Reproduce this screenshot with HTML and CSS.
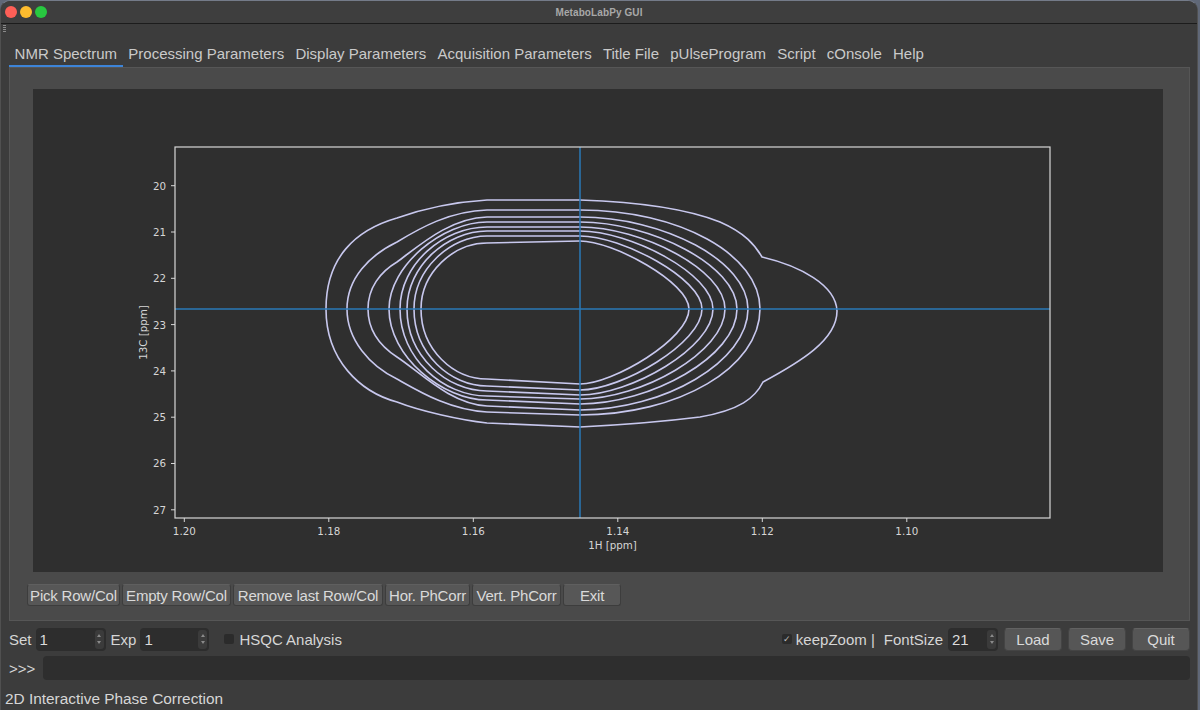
FILE: index.html
```html
<!DOCTYPE html>
<html>
<head>
<meta charset="utf-8">
<title>MetaboLabPy GUI</title>
<link rel="stylesheet" href="styles.css">
</head>
<body>
<div class="window">
  <div class="titlebar">
    <div class="lights">
      <span class="light red"></span><span class="light yellow"></span><span class="light green"></span>
    </div>
    <div class="title">MetaboLabPy GUI</div>
    <div></div>
  </div>
  <div class="main">
    <div class="grip"></div>
    <div class="tabs">
      <div class="tab active">NMR Spectrum</div>
      <div class="tab">Processing Parameters</div>
      <div class="tab">Display Parameters</div>
      <div class="tab">Acquisition Parameters</div>
      <div class="tab">Title File</div>
      <div class="tab">pUlseProgram</div>
      <div class="tab">Script</div>
      <div class="tab">cOnsole</div>
      <div class="tab">Help</div>
    </div>
    <div class="pane">
      <div class="canvas">
        <svg class="plot" width="1130" height="483" viewBox="33 89 1130 483" xmlns="http://www.w3.org/2000/svg">
          <g class="contours" fill="none" stroke="#c8c8ee" stroke-width="1.6">
            <path d="M487,200 L580,200 C640,202 690,210 720,222 C745,233 755,245 762,257 C800,266 836,285 837,311 C837,340 800,362 763,382 C755,398 740,410 700,417 C660,422 620,425 580,427 L487,423 C460,420 420,411 397,402 C360,392 326,360 326,309 C326,258 355,230 397,218 C425,208 455,202 487,200 Z"/>
            <path d="M487,210 L580,210 C679,210 760,254.5 760,309 C760,367.3 679,415 580,415 L487,412 C450,410 420,392 397,379 C370,366 347,340 347,309 C347,278 370,255 397,242 C420,228 450,211 487,210 Z"/>
            <path d="M487,217 L580,217 C664,217 748,261.2 748,309 C748,361.5 664,410 580,410 L487,406 C450,404 420,372 397,357 C380,346 368,330 368,309 C368,288 380,272 397,262 C420,245 450,218 487,217 Z"/>
            <path d="M487,222 L580,222 C650.7,222 737,265.5 737,309 C737,356.5 650.7,404 580,404 L487,400 C442.9,400 389,356.5 389,309 C389,265.5 442.9,222 487,222 Z"/>
            <path d="M487,227 L580,227 C640.9,227 725,269.6 725,309 C725,352.2 640.9,399 580,399 L487,396 C443.5,396 400,358.5 400,309 C400,263.9 443.5,227 487,227 Z"/>
            <path d="M487,231 L580,231 C630.5,231 713,273.9 713,309 C713,347.7 630.5,395 580,395 L487,391 C447,391 407,356.3 407,309 C407,266.1 447,231 487,231 Z"/>
            <path d="M487,236 L580,236 C621.5,236 702,278.3 702,309 C702,343 621.5,390 580,390 L487,386 C450.5,386 414,353.6 414,309 C414,268.9 450.5,236 487,236 Z"/>
            <path d="M487,243 L580,241 C612.7,241 689,282.2 689,309 C689,339 612.7,384 580,384 L487,379 C454,379 421,350.3 421,309 C421,272.2 454,243 487,243 Z"/>
          </g>
          <g stroke="#2a7ab8" stroke-width="1.5">
            <line x1="580" y1="147" x2="580" y2="518"/>
            <line x1="175" y1="309" x2="1050" y2="309"/>
          </g>
          <rect x="175" y="147" width="875" height="371" fill="none" stroke="#d8d8d8" stroke-width="1.2"/>
          <g stroke="#d8d8d8" stroke-width="1">
            <line x1="171" y1="185.7" x2="175" y2="185.7"/>
            <line x1="171" y1="232" x2="175" y2="232"/>
            <line x1="171" y1="278.3" x2="175" y2="278.3"/>
            <line x1="171" y1="324.6" x2="175" y2="324.6"/>
            <line x1="171" y1="370.9" x2="175" y2="370.9"/>
            <line x1="171" y1="417.2" x2="175" y2="417.2"/>
            <line x1="171" y1="463.5" x2="175" y2="463.5"/>
            <line x1="171" y1="509.8" x2="175" y2="509.8"/>
            <line x1="184.3" y1="518" x2="184.3" y2="522"/>
            <line x1="328.8" y1="518" x2="328.8" y2="522"/>
            <line x1="473.3" y1="518" x2="473.3" y2="522"/>
            <line x1="617.8" y1="518" x2="617.8" y2="522"/>
            <line x1="762.3" y1="518" x2="762.3" y2="522"/>
            <line x1="906.8" y1="518" x2="906.8" y2="522"/>
          </g>
          <g class="ticklabels" fill="#d6d6d6" text-anchor="end">
            <text x="166" y="189.6">20</text>
            <text x="166" y="235.9">21</text>
            <text x="166" y="282.2">22</text>
            <text x="166" y="328.5">23</text>
            <text x="166" y="374.8">24</text>
            <text x="166" y="421.1">25</text>
            <text x="166" y="467.4">26</text>
            <text x="166" y="513.7">27</text>
          </g>
          <g class="ticklabels" fill="#d6d6d6" text-anchor="middle">
            <text x="184.3" y="535">1.20</text>
            <text x="328.8" y="535">1.18</text>
            <text x="473.3" y="535">1.16</text>
            <text x="617.8" y="535">1.14</text>
            <text x="762.3" y="535">1.12</text>
            <text x="906.8" y="535">1.10</text>
            <text x="612.5" y="549">1H [ppm]</text>
            <text transform="translate(147,332.5) rotate(-90)">13C [ppm]</text>
          </g>
        </svg>
      </div>
      <div class="btnrow">
        <button class="pbtn w-pick">Pick Row/Col</button>
        <button class="pbtn w-empty">Empty Row/Col</button>
        <button class="pbtn w-remove">Remove last Row/Col</button>
        <button class="pbtn w-hor">Hor. PhCorr</button>
        <button class="pbtn w-vert">Vert. PhCorr</button>
        <button class="pbtn w-exit">Exit</button>
      </div>
    </div>
    <div class="controls">
      <span class="lbl">Set</span>
      <div class="spin spin-set"><span>1</span><span class="arrows"><i class="up"></i><i class="down"></i></span></div>
      <span class="lbl lbl-exp">Exp</span>
      <div class="spin spin-exp"><span>1</span><span class="arrows"><i class="up"></i><i class="down"></i></span></div>
      <span class="check check-hsqc"></span>
      <span class="lbl lbl-hsqc">HSQC Analysis</span>
      <div class="right">
        <span class="check checked">✓</span>
        <span class="lbl lbl-keep">keepZoom |</span>
        <span class="lbl lbl-font">FontSize</span>
        <div class="spin spin-font"><span>21</span><span class="arrows"><i class="up"></i><i class="down"></i></span></div>
        <button class="cbtn">Load</button>
        <button class="cbtn">Save</button>
        <button class="cbtn">Quit</button>
      </div>
    </div>
    <div class="console">
      <span class="prompt">&gt;&gt;&gt;</span>
      <div class="input"></div>
    </div>
    <div class="status">2D Interactive Phase Correction</div>
  </div>
</div>
</body>
</html>
```
FILE: styles.css
```css
html, body {
  margin: 0;
  padding: 0;
  width: 1200px;
  height: 710px;
  overflow: hidden;
  background: #606878;
}

.window {
  width: 1198px;
  height: 710px;
  box-sizing: border-box;
  background: #3c3c3c;
  border-top: 1px solid #747b89;
  border-left: 1px solid #505050;
  border-right: 1px solid #505050;
  border-radius: 10px 10px 0 0;
  overflow: hidden;
  display: flex;
  flex-direction: column;
  font-family: "Liberation Sans", Arial, sans-serif;
  color: #d6d6d6;
}

.titlebar {
  height: 22px;
  border-bottom: 1px solid #1c1c1c;
  background: #3e3e3e;
  display: grid;
  grid-template-columns: 1fr auto 1fr;
  align-items: center;
}

.lights {
  display: flex;
  gap: 3px;
  padding-left: 4px;
}

.light {
  width: 12px;
  height: 12px;
  border-radius: 50%;
  display: block;
}
.red { background: #fe5f57; }
.yellow { background: #febc2e; }
.green { background: #28c840; }

.title {
  font-size: 10px;
  font-weight: bold;
  color: #a8a8a8;
  letter-spacing: 0.1px;
}

.main {
  flex: 1;
  display: flex;
  flex-direction: column;
  position: relative;
}

.grip {
  position: absolute;
  left: 2px;
  top: 1px;
  width: 3px;
  height: 8px;
  background: repeating-linear-gradient(to bottom, #8a8a8a 0 1px, transparent 1px 2px);
}

.tabs {
  display: flex;
  margin-top: 18px;
  margin-left: 8px;
  height: 25px;
}

.tab {
  box-sizing: border-box;
  height: 25px;
  line-height: 23px;
  padding: 0 5.6px;
  font-size: 15px;
  color: #cacaca;
  border-bottom: 2px solid transparent;
  white-space: nowrap;
}

.tab.active {
  border-bottom-color: #3d84d8;
}

.pane {
  margin-left: 8px;
  width: 1181px;
  height: 554px;
  box-sizing: border-box;
  background: #4a4a4a;
  border: 1px solid #565656;
  padding: 21px 0 14px;
  display: flex;
  flex-direction: column;
}

.canvas {
  margin-left: 23px;
  width: 1130px;
  height: 483px;
  background: #2f2f2f;
}

.plot {
  display: block;
}

.ticklabels {
  font-family: "DejaVu Sans", sans-serif;
  font-size: 10.3px;
}

.btnrow {
  margin-top: 12px;
  margin-left: 17px;
  display: flex;
  gap: 2px;
  height: 22px;
}

.pbtn {
  box-sizing: border-box;
  height: 22px;
  padding: 0;
  margin: 0;
  font-family: "Liberation Sans", Arial, sans-serif;
  font-size: 15px;
  letter-spacing: -0.2px;
  color: #dadada;
  background: #575757;
  border: 1px solid #3d3d3d;
  border-top-color: #5f5f5f;
  border-radius: 3px;
  white-space: nowrap;
  overflow: visible;
}

.w-pick { width: 93px; }
.w-empty { width: 109px; }
.w-remove { width: 150px; }
.w-hor { width: 85px; }
.w-vert { width: 89px; }
.w-exit { width: 58px; }

.controls {
  margin-top: 6px;
  height: 24px;
  display: flex;
  align-items: center;
  padding: 0 7px 0 8px;
  font-size: 15px;
}

.lbl {
  white-space: nowrap;
  color: #d6d6d6;
}

.spin {
  box-sizing: border-box;
  height: 23px;
  background: #2d2d2d;
  border-radius: 4px;
  display: flex;
  align-items: center;
  justify-content: space-between;
  padding-left: 4px;
  color: #dcdcdc;
  font-size: 15px;
}

.spin-set { width: 70px; margin-left: 4px; }
.spin-exp { width: 69px; margin-left: 4px; }
.spin-font { width: 50px; margin-left: 5px; }
.lbl-exp { margin-left: 5px; }

.arrows {
  width: 9px;
  height: 19px;
  margin-right: 2px;
  background: #3b3b3b;
  border-radius: 3px;
  display: flex;
  flex-direction: column;
  align-items: center;
  justify-content: center;
  gap: 4px;
}

.arrows i {
  display: block;
  width: 0;
  height: 0;
  border-left: 2px solid transparent;
  border-right: 2px solid transparent;
}
.arrows .up { border-bottom: 3px solid #8a8a8a; }
.arrows .down { border-top: 3px solid #8a8a8a; }

.check {
  box-sizing: border-box;
  width: 10px;
  height: 10px;
  background: #2b2b2b;
  border-radius: 2px;
  display: flex;
  align-items: center;
  justify-content: center;
  font-size: 9px;
  color: #bdbdbd;
  line-height: 10px;
}

.check-hsqc { margin-left: 15px; }
.lbl-hsqc { margin-left: 5px; }

.right {
  margin-left: auto;
  display: flex;
  align-items: center;
}

.lbl-keep { margin-left: 4px; }
.lbl-font { margin-left: 9px; }

.cbtn {
  box-sizing: border-box;
  width: 58px;
  height: 23px;
  margin: 0 0 0 6px;
  padding: 0;
  font-family: "Liberation Sans", Arial, sans-serif;
  font-size: 15px;
  color: #dadada;
  background: #565656;
  border: 1px solid #444;
  border-top-color: #626262;
  border-radius: 4px;
}

.console {
  margin-top: 5px;
  height: 24px;
  display: flex;
  align-items: center;
  padding: 0 7px 0 8px;
}

.prompt {
  font-size: 15px;
  color: #d6d6d6;
}

.input {
  flex: 1;
  height: 24px;
  margin-left: 8px;
  background: #2e2e2e;
  border-radius: 4px;
}

.status {
  flex: 1;
  padding: 10px 0 0 4px;
  line-height: 18px;
  font-size: 15.4px;
  color: #d6d6d6;
}
```
